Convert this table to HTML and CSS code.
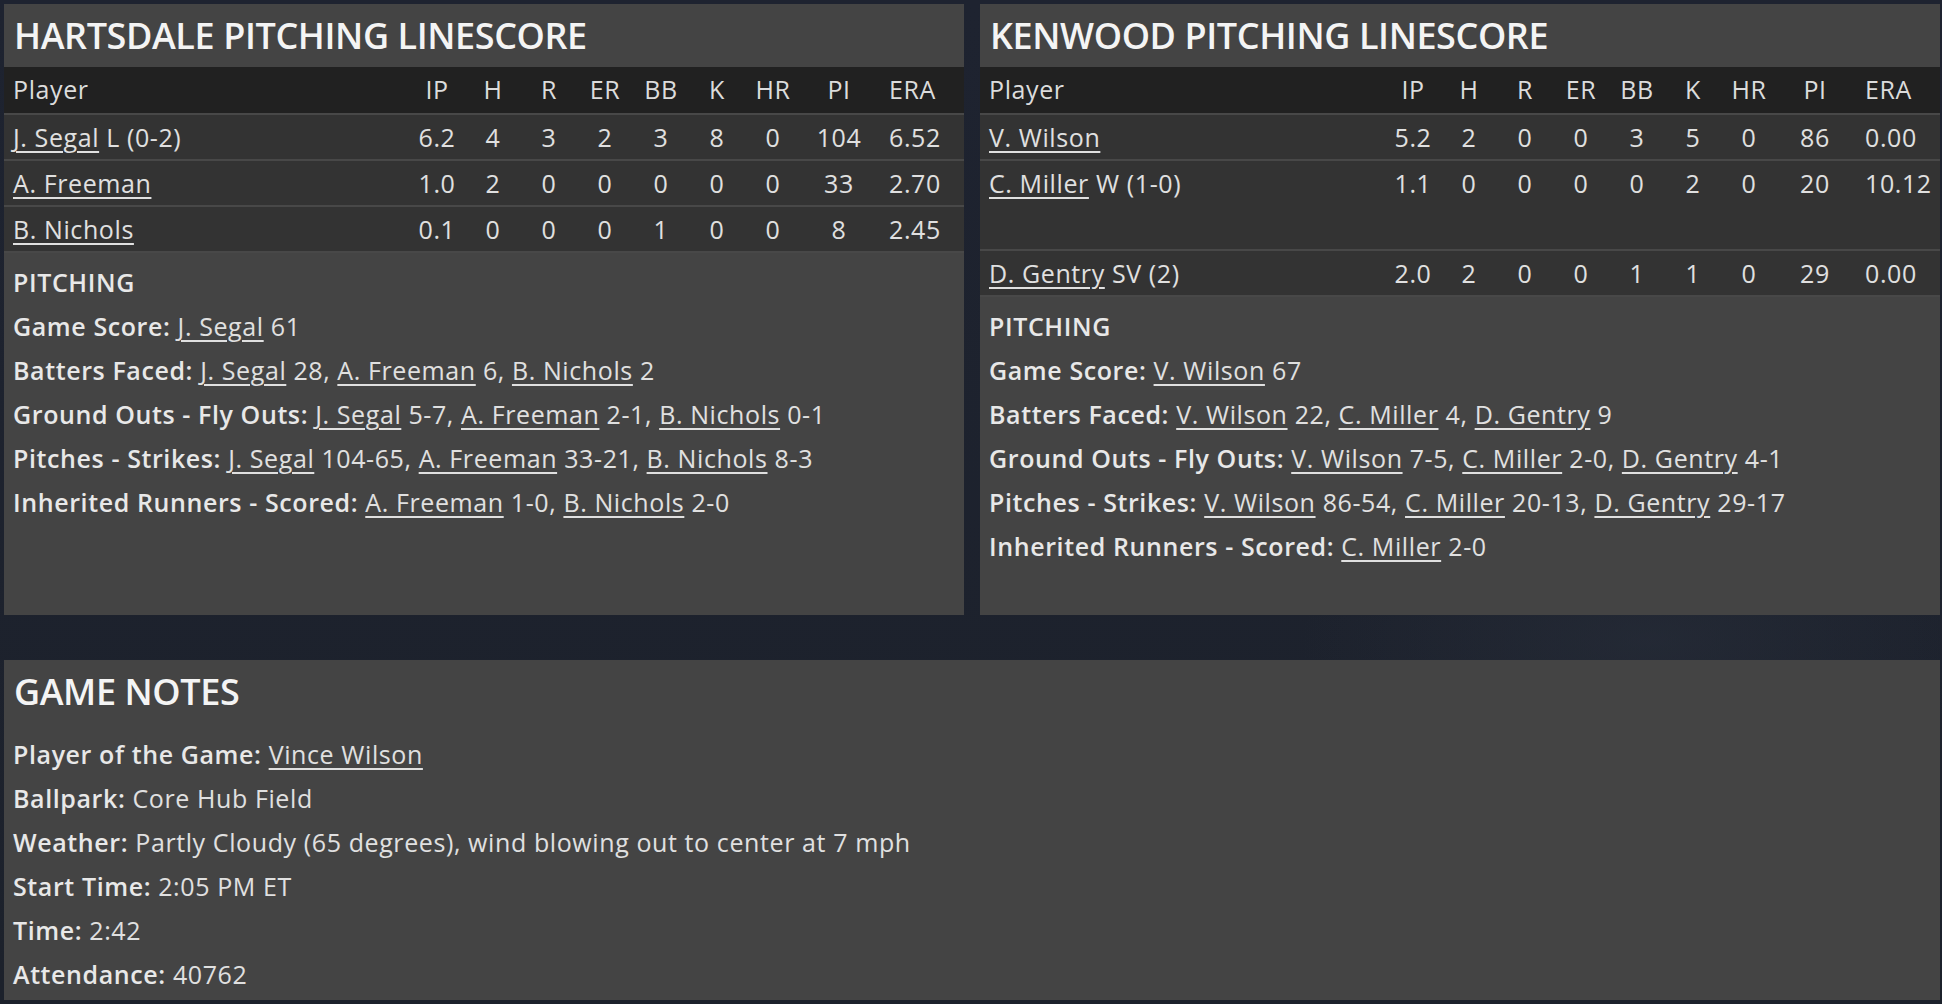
FILE: index.html
```html
<!DOCTYPE html>
<html lang="en">
<head>
<meta charset="utf-8">
<title>Pitching Linescore</title>
<link rel="stylesheet" href="styles.css">
</head>
<body>
<div class="page">
  <div class="top-row">
    <section class="panel">
      <h2 class="panel-title">HARTSDALE PITCHING LINESCORE</h2>
      <div class="table">
        <div class="row head">
          <div class="c name">Player</div><div class="c">IP</div><div class="c">H</div><div class="c">R</div><div class="c">ER</div><div class="c">BB</div><div class="c">K</div><div class="c">HR</div><div class="c">PI</div><div class="c era">ERA</div>
        </div>
        <div class="row">
          <div class="c name"><a>J. Segal</a> L (0-2)</div><div class="c">6.2</div><div class="c">4</div><div class="c">3</div><div class="c">2</div><div class="c">3</div><div class="c">8</div><div class="c">0</div><div class="c">104</div><div class="c era">6.52</div>
        </div>
        <div class="row">
          <div class="c name"><a>A. Freeman</a></div><div class="c">1.0</div><div class="c">2</div><div class="c">0</div><div class="c">0</div><div class="c">0</div><div class="c">0</div><div class="c">0</div><div class="c">33</div><div class="c era">2.70</div>
        </div>
        <div class="row">
          <div class="c name"><a>B. Nichols</a></div><div class="c">0.1</div><div class="c">0</div><div class="c">0</div><div class="c">0</div><div class="c">1</div><div class="c">0</div><div class="c">0</div><div class="c">8</div><div class="c era">2.45</div>
        </div>
      </div>
      <div class="notes">
        <div class="line sub">PITCHING</div>
        <div class="line"><b>Game Score:</b> <a>J. Segal</a> 61</div>
        <div class="line"><b>Batters Faced:</b> <a>J. Segal</a> 28, <a>A. Freeman</a> 6, <a>B. Nichols</a> 2</div>
        <div class="line"><b>Ground Outs - Fly Outs:</b> <a>J. Segal</a> 5-7, <a>A. Freeman</a> 2-1, <a>B. Nichols</a> 0-1</div>
        <div class="line"><b>Pitches - Strikes:</b> <a>J. Segal</a> 104-65, <a>A. Freeman</a> 33-21, <a>B. Nichols</a> 8-3</div>
        <div class="line"><b>Inherited Runners - Scored:</b> <a>A. Freeman</a> 1-0, <a>B. Nichols</a> 2-0</div>
      </div>
    </section>

    <section class="panel">
      <h2 class="panel-title">KENWOOD PITCHING LINESCORE</h2>
      <div class="table">
        <div class="row head">
          <div class="c name">Player</div><div class="c">IP</div><div class="c">H</div><div class="c">R</div><div class="c">ER</div><div class="c">BB</div><div class="c">K</div><div class="c">HR</div><div class="c">PI</div><div class="c era">ERA</div>
        </div>
        <div class="row">
          <div class="c name"><a>V. Wilson</a></div><div class="c">5.2</div><div class="c">2</div><div class="c">0</div><div class="c">0</div><div class="c">3</div><div class="c">5</div><div class="c">0</div><div class="c">86</div><div class="c era">0.00</div>
        </div>
        <div class="row tall">
          <div class="c name"><a>C. Miller</a> W (1-0)</div><div class="c">1.1</div><div class="c">0</div><div class="c">0</div><div class="c">0</div><div class="c">0</div><div class="c">2</div><div class="c">0</div><div class="c">20</div><div class="c era">10.12</div>
        </div>
        <div class="row">
          <div class="c name"><a>D. Gentry</a> SV (2)</div><div class="c">2.0</div><div class="c">2</div><div class="c">0</div><div class="c">0</div><div class="c">1</div><div class="c">1</div><div class="c">0</div><div class="c">29</div><div class="c era">0.00</div>
        </div>
      </div>
      <div class="notes">
        <div class="line sub">PITCHING</div>
        <div class="line"><b>Game Score:</b> <a>V. Wilson</a> 67</div>
        <div class="line"><b>Batters Faced:</b> <a>V. Wilson</a> 22, <a>C. Miller</a> 4, <a>D. Gentry</a> 9</div>
        <div class="line"><b>Ground Outs - Fly Outs:</b> <a>V. Wilson</a> 7-5, <a>C. Miller</a> 2-0, <a>D. Gentry</a> 4-1</div>
        <div class="line"><b>Pitches - Strikes:</b> <a>V. Wilson</a> 86-54, <a>C. Miller</a> 20-13, <a>D. Gentry</a> 29-17</div>
        <div class="line"><b>Inherited Runners - Scored:</b> <a>C. Miller</a> 2-0</div>
      </div>
    </section>
  </div>

  <section class="panel game-notes">
    <h2 class="panel-title">GAME NOTES</h2>
    <div class="notes">
      <div class="line"><b>Player of the Game:</b> <a>Vince Wilson</a></div>
      <div class="line"><b>Ballpark:</b> Core Hub Field</div>
      <div class="line"><b>Weather:</b> Partly Cloudy (65 degrees), wind blowing out to center at 7 mph</div>
      <div class="line"><b>Start Time:</b> 2:05 PM ET</div>
      <div class="line"><b>Time:</b> 2:42</div>
      <div class="line"><b>Attendance:</b> 40762</div>
    </div>
  </section>
</div>
</body>
</html>
```

FILE: styles.css
```css
* { box-sizing: border-box; }

html, body {
  margin: 0;
  padding: 0;
}

body {
  width: 1942px;
  height: 1004px;
  overflow: hidden;
  background: #1d222c;
  background-image:
    radial-gradient(ellipse 500px 200px at 1650px 640px, rgba(40, 46, 58, 0.6), rgba(29, 34, 44, 0) 70%),
    linear-gradient(180deg, #1e2330 0%, #1c212b 100%);
  font-family: "Open Sans", "Noto Sans", sans-serif;
  color: #e2e2e2;
}

.page {
  padding: 4px 0 0 4px;
  display: flex;
  flex-direction: column;
  gap: 45px;
}

.top-row {
  display: grid;
  grid-template-columns: 960px 960px;
  gap: 16px;
  height: 611px;
}

.panel {
  background: #444444;
  display: flex;
  flex-direction: column;
}

.panel-title {
  margin: 0;
  height: 63px;
  padding: 0 0 0 10px;
  font-size: 36px;
  font-weight: 600;
  letter-spacing: -0.4px;
  line-height: 63px;
  color: #f4f4f4;
  white-space: nowrap;
}

.table {
  display: flex;
  flex-direction: column;
}

.row {
  display: grid;
  grid-template-columns: 405px repeat(7, 56px) 76px 87px;
  height: 46px;
  background: #333333;
  border-top: 2px solid #484848;
  font-size: 25px;
  letter-spacing: 0.6px;
  line-height: 44px;
  color: #e0e0e0;
}

.row.head {
  background: #212121;
  border-top: 0;
  color: #dcdcdc;
}

.row.tall {
  height: 90px;
}

.c {
  text-align: center;
  white-space: nowrap;
}

.c.name {
  text-align: left;
  padding-left: 9px;
}

.c.era {
  text-align: left;
  padding-left: 12px;
}

a {
  color: inherit;
  text-decoration: underline;
  text-decoration-thickness: 2px;
  text-underline-offset: 4px;
}

.notes {
  border-top: 2px solid #484848;
  padding: 7px 0 0 9px;
  font-size: 25px;
  letter-spacing: 0.6px;
  line-height: 44px;
  color: #e0e0e0;
}

.line {
  white-space: nowrap;
}

.line b,
.line.sub {
  font-weight: 600;
  color: #e8e8e8;
}

.game-notes {
  width: 1936px;
  height: 340px;
}

.game-notes .notes {
  border-top: 0;
  padding-top: 9px;
}
```
